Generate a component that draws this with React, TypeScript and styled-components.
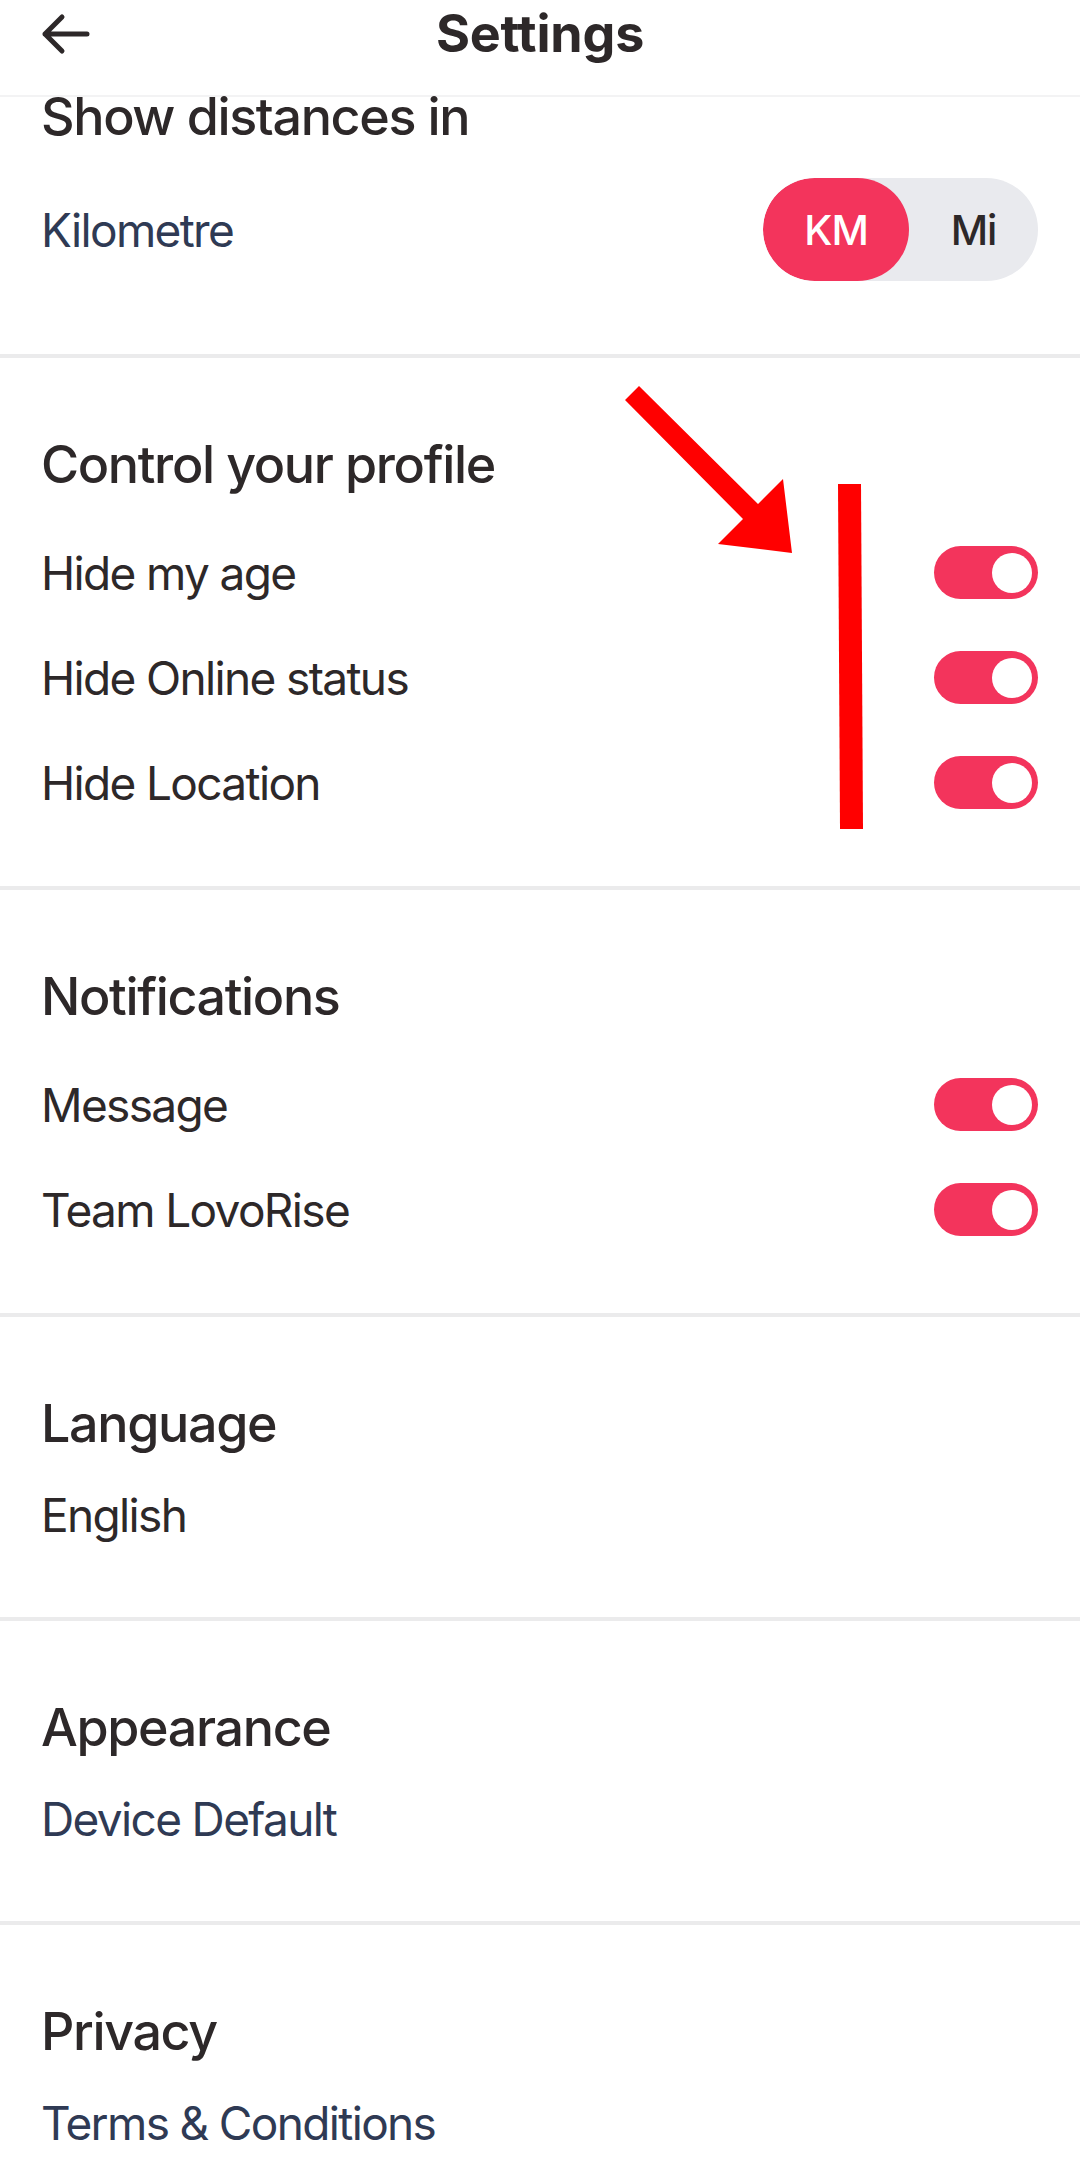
import styled, { createGlobalStyle } from 'styled-components';

const GlobalStyle = createGlobalStyle`
  html, body {
    margin: 0;
    padding: 0;
    background: #fff;
  }
  body {
    font-family: Inter, "Noto Sans", sans-serif;
    -webkit-font-smoothing: antialiased;
  }
`;

const Screen = styled.div`
  position: relative;
  width: 1080px;
  height: 2177px;
  overflow: hidden;
  background: #fff;
  color: #2d2829;
`;

const Header = styled.header`
  height: 95px;
  display: grid;
  grid-template-columns: 140px 1fr 140px;
  align-items: start;
  border-bottom: 2px solid #f3f3f4;
`;

const BackButton = styled.button`
  height: 67px;
  display: flex;
  align-items: center;
  padding: 0 0 0 40px;
  border: none;
  background: none;
  color: #2d2829;
`;

const HeaderTitle = styled.h1`
  margin: 0;
  text-align: center;
  font-size: 52px;
  line-height: 67px;
  font-weight: 700;
  letter-spacing: -0.2px;
`;

const Section = styled.section<{ $top?: number; $bottom?: number; $last?: boolean }>`
  padding: ${(p) => p.$top ?? 76}px 42px ${(p) => p.$bottom ?? 51}px 41px;
  border-bottom: ${(p) => (p.$last ? 'none' : '4px solid #ebebec')};
`;

const SectionTitle = styled.h2<{ $lh?: number }>`
  margin: 0;
  font-size: 52px;
  line-height: ${(p) => p.$lh ?? 62}px;
  font-weight: 500;
  letter-spacing: -1.35px;
  white-space: nowrap;
`;

const Rows = styled.div<{ $gap?: number }>`
  margin-top: ${(p) => p.$gap ?? 24}px;
  display: flex;
  flex-direction: column;
`;

const Row = styled.div<{ $h?: number }>`
  height: ${(p) => p.$h ?? 105}px;
  display: flex;
  align-items: center;
  justify-content: space-between;
`;

const Label = styled.span<{ $muted?: boolean }>`
  font-size: 46px;
  line-height: 62px;
  font-weight: 400;
  letter-spacing: -1.65px;
  color: ${(p) => (p.$muted ? '#2f3a54' : '#2d2829')};
`;

const Segmented = styled.div`
  width: 275px;
  height: 103px;
  display: flex;
  border-radius: 52px;
  background: #e9eaee;
  overflow: hidden;
`;

const SegmentButton = styled.button<{ $active?: boolean }>`
  flex: ${(p) => (p.$active ? '0 0 146px' : '1')};
  border: none;
  border-radius: 52px;
  background: ${(p) => (p.$active ? '#f3345c' : 'transparent')};
  color: ${(p) => (p.$active ? '#fff' : '#2d2829')};
  font-family: Inter, sans-serif;
  font-size: 41px;
  font-weight: 500;
  letter-spacing: -1px;
  padding: 0;
`;

const Track = styled.div<{ $on?: boolean }>`
  width: 104px;
  height: 53px;
  box-sizing: border-box;
  padding: 0 6px;
  border-radius: 27px;
  background: ${(p) => (p.$on ? '#f3345c' : '#d8d9de')};
  display: flex;
  align-items: center;
  justify-content: ${(p) => (p.$on ? 'flex-end' : 'flex-start')};
`;

const Knob = styled.div`
  width: 40px;
  height: 40px;
  border-radius: 50%;
  background: #fff;
`;

const Markup = styled.svg`
  position: absolute;
  top: 0;
  left: 0;
  pointer-events: none;
`;

function Switch({ on }: { on: boolean }) {
  return (
    <Track $on={on}>
      <Knob />
    </Track>
  );
}

const profile = ['Hide my age', 'Hide Online status', 'Hide Location'];
const notifications = ['Message', 'Team LovoRise'];

export default function App() {
  return (
    <Screen>
      <GlobalStyle />
      <Header>
        <BackButton aria-label="Back">
          <svg width="50" height="42" viewBox="0 0 50 42" fill="none">
            <path
              d="M47 21H5M22 4L5 21l17 17"
              stroke="currentColor"
              strokeWidth="5"
              strokeLinecap="round"
              strokeLinejoin="round"
            />
          </svg>
        </BackButton>
        <HeaderTitle>Settings</HeaderTitle>
        <div />
      </Header>

      <Section $top={0} $bottom={73}>
        <SectionTitle $lh={40}>Show distances in</SectionTitle>
        <Rows $gap={41}>
          <Row $h={103}>
            <Label $muted>Kilometre</Label>
            <Segmented>
              <SegmentButton $active>KM</SegmentButton>
              <SegmentButton>Mi</SegmentButton>
            </Segmented>
          </Row>
        </Rows>
      </Section>

      <Section>
        <SectionTitle>Control your profile</SectionTitle>
        <Rows>
          {profile.map((item) => (
            <Row key={item}>
              <Label>{item}</Label>
              <Switch on />
            </Row>
          ))}
        </Rows>
      </Section>

      <Section>
        <SectionTitle>Notifications</SectionTitle>
        <Rows>
          {notifications.map((item) => (
            <Row key={item}>
              <Label>{item}</Label>
              <Switch on />
            </Row>
          ))}
        </Rows>
      </Section>

      <Section $bottom={66}>
        <SectionTitle>Language</SectionTitle>
        <Rows>
          <Row $h={72}>
            <Label>English</Label>
          </Row>
        </Rows>
      </Section>

      <Section $bottom={66}>
        <SectionTitle>Appearance</SectionTitle>
        <Rows>
          <Row $h={72}>
            <Label $muted>Device Default</Label>
          </Row>
        </Rows>
      </Section>

      <Section $bottom={66} $last>
        <SectionTitle>Privacy</SectionTitle>
        <Rows>
          <Row $h={72}>
            <Label $muted>Terms &amp; Conditions</Label>
          </Row>
        </Rows>
      </Section>

      {/* red annotation drawn over the screenshot */}
      <Markup width="1080" height="2177" viewBox="0 0 1080 2177">
        <polygon
          points="639,386 758,504 783,479 792,553 718,544 743,519 625,400"
          fill="#ff0000"
        />
        <polygon points="838,484 861,484 863,829 840,829" fill="#ff0000" />
      </Markup>
    </Screen>
  );
}
